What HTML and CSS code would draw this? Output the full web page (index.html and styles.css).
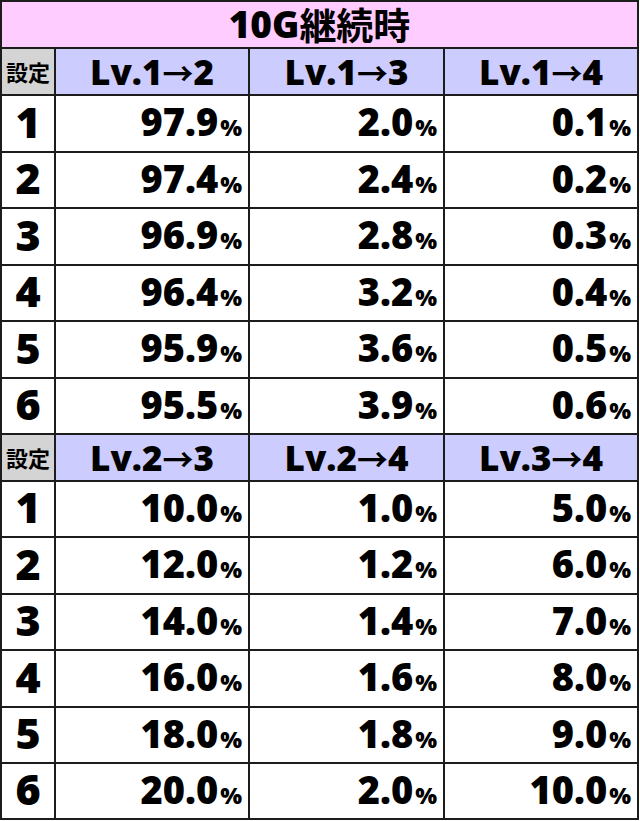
FILE: index.html
```html
<!DOCTYPE html>
<html lang="ja">
<head>
<meta charset="utf-8">
<title>10G継続時</title>
<link rel="stylesheet" href="styles.css">
</head>
<body>
<div class="table">
  <div class="cell title">10G<span class="kanji">継続時</span></div>

  <div class="cell settei">設定</div>
  <div class="cell head">Lv.1<span class="arrow">→</span>2</div>
  <div class="cell head">Lv.1<span class="arrow">→</span>3</div>
  <div class="cell head">Lv.1<span class="arrow">→</span>4</div>

  <div class="cell num">1</div><div class="cell val">97.9<span class="pct">%</span></div><div class="cell val">2.0<span class="pct">%</span></div><div class="cell val">0.1<span class="pct">%</span></div>
  <div class="cell num">2</div><div class="cell val">97.4<span class="pct">%</span></div><div class="cell val">2.4<span class="pct">%</span></div><div class="cell val">0.2<span class="pct">%</span></div>
  <div class="cell num">3</div><div class="cell val">96.9<span class="pct">%</span></div><div class="cell val">2.8<span class="pct">%</span></div><div class="cell val">0.3<span class="pct">%</span></div>
  <div class="cell num">4</div><div class="cell val">96.4<span class="pct">%</span></div><div class="cell val">3.2<span class="pct">%</span></div><div class="cell val">0.4<span class="pct">%</span></div>
  <div class="cell num">5</div><div class="cell val">95.9<span class="pct">%</span></div><div class="cell val">3.6<span class="pct">%</span></div><div class="cell val">0.5<span class="pct">%</span></div>
  <div class="cell num">6</div><div class="cell val">95.5<span class="pct">%</span></div><div class="cell val">3.9<span class="pct">%</span></div><div class="cell val">0.6<span class="pct">%</span></div>

  <div class="cell settei">設定</div>
  <div class="cell head">Lv.2<span class="arrow">→</span>3</div>
  <div class="cell head">Lv.2<span class="arrow">→</span>4</div>
  <div class="cell head">Lv.3<span class="arrow">→</span>4</div>

  <div class="cell num">1</div><div class="cell val">10.0<span class="pct">%</span></div><div class="cell val">1.0<span class="pct">%</span></div><div class="cell val">5.0<span class="pct">%</span></div>
  <div class="cell num">2</div><div class="cell val">12.0<span class="pct">%</span></div><div class="cell val">1.2<span class="pct">%</span></div><div class="cell val">6.0<span class="pct">%</span></div>
  <div class="cell num">3</div><div class="cell val">14.0<span class="pct">%</span></div><div class="cell val">1.4<span class="pct">%</span></div><div class="cell val">7.0<span class="pct">%</span></div>
  <div class="cell num">4</div><div class="cell val">16.0<span class="pct">%</span></div><div class="cell val">1.6<span class="pct">%</span></div><div class="cell val">8.0<span class="pct">%</span></div>
  <div class="cell num">5</div><div class="cell val">18.0<span class="pct">%</span></div><div class="cell val">1.8<span class="pct">%</span></div><div class="cell val">9.0<span class="pct">%</span></div>
  <div class="cell num">6</div><div class="cell val">20.0<span class="pct">%</span></div><div class="cell val">2.0<span class="pct">%</span></div><div class="cell val">10.0<span class="pct">%</span></div>
</div>
</body>
</html>
```

FILE: styles.css
```css
html, body {
  margin: 0;
  padding: 0;
  background: #ffffff;
}

body {
  font-family: "Open Sans", "Noto Sans CJK JP", sans-serif;
  font-weight: 800;
  color: #000000;
}

.table {
  width: 635px;
  display: grid;
  grid-template-columns: 52px 192px 193px 192px;
  grid-template-rows: 45px 45px 55px 54px 55px 54px 55px 54px 45px 54px 55px 54px 55px 54px 54px;
  gap: 2px;
  padding: 2px;
  background: #1c1c1c;
}

.cell {
  background: #ffffff;
  display: flex;
  align-items: center;
  white-space: nowrap;
  line-height: 1.2;
  min-width: 0;
  min-height: 0;
  box-sizing: border-box;
}

.title {
  grid-column: 1 / -1;
  background: #ffccff;
  justify-content: center;
  font-size: 37px;
  line-height: 1.15;
}

.kanji {
  font-family: "Noto Sans CJK JP", sans-serif;
  font-size: 37px;
  font-weight: 700;
  line-height: 1.15;
}

.settei {
  background: #d4d4d4;
  justify-content: center;
  font-family: "Noto Sans CJK JP", sans-serif;
  font-size: 22px;
  font-weight: 700;
}

.head {
  background: #ccccff;
  justify-content: center;
  font-size: 35px;
  line-height: 1.1;
  padding-top: 1px;
}

.arrow {
  font-family: "Noto Sans CJK JP", sans-serif;
  font-weight: 700;
  font-size: 31px;
}

.num {
  justify-content: center;
  font-size: 43px;
  padding-bottom: 4px;
}

.val {
  justify-content: flex-end;
  align-items: baseline;
  padding-right: 6px;
  padding-top: 3px;
  font-size: 38px;
}

.pct {
  font-size: 23px;
  margin-left: 2px;
}
```
